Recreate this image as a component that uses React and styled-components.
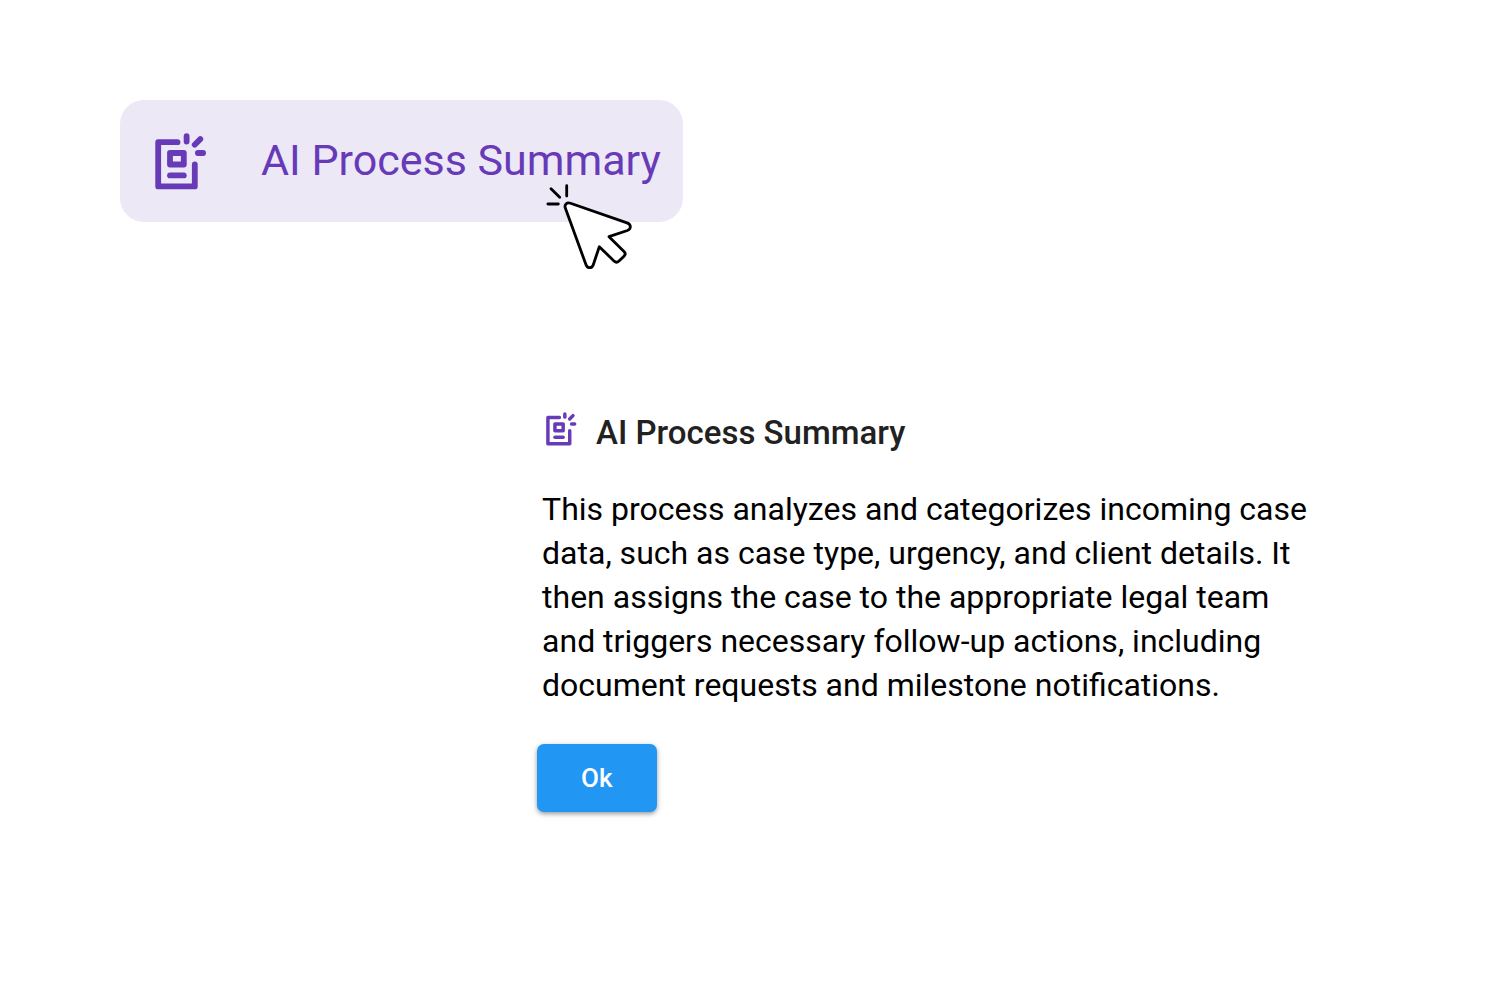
import React, { useState } from "react";
import styled, { createGlobalStyle } from "styled-components";

const GlobalStyle = createGlobalStyle`
  * {
    box-sizing: border-box;
  }

  body {
    margin: 0;
    background: #fff;
    font-family: Roboto, "Liberation Sans", sans-serif;
  }
`;

const Page = styled.main`
  display: flex;
  flex-direction: column;
  align-items: flex-start;
  gap: 190px;
  padding: 100px 8%;
`;

const SummaryButton = styled.button`
  position: relative;
  display: flex;
  align-items: flex-start;
  gap: 54px;
  padding: 33px 22px 32px 35px;
  border: none;
  border-radius: 24px;
  background: #ede8f6;
  color: #673ab7;
  font-family: inherit;
  font-size: 43px;
  line-height: 54px;
  white-space: nowrap;
  cursor: pointer;
`;

const Pointer = styled.svg`
  position: absolute;
  right: 50px;
  bottom: -48px;
  width: 87px;
  height: 86px;
  pointer-events: none;
`;

const Icon = styled.svg`
  flex: none;
  width: ${({ $small }) => ($small ? "31px" : "52px")};
  height: ${({ $small }) => ($small ? "34px" : "57px")};
  color: #673ab7;
`;

const Dialog = styled.section`
  display: flex;
  flex-direction: column;
  align-items: flex-start;
  max-width: 785px;
  margin-left: 33.1%;
`;

const DialogHeader = styled.header`
  display: flex;
  align-items: flex-start;
  gap: 19px;
  padding: 0 9px;
`;

const Title = styled.h2`
  margin: 0;
  color: #212121;
  font-size: 33px;
  font-weight: 500;
  line-height: 42px;
`;

const Description = styled.p`
  margin: 33px 0 37px;
  padding: 0 5px;
  color: #000;
  font-size: 32px;
  line-height: 44px;
`;

const OkButton = styled.button`
  padding: 18px 44px;
  border: none;
  border-radius: 7px;
  background: #2196f3;
  box-shadow: 0 2px 4px rgba(0, 0, 0, 0.35), 0 1px 10px rgba(0, 0, 0, 0.08);
  color: #fff;
  font-family: inherit;
  font-size: 26px;
  font-weight: 500;
  line-height: 32px;
  cursor: pointer;
`;

const SummaryIcon = ({ small }) => (
  <Icon
    $small={small}
    viewBox="0 0 52 57"
    fill="none"
    stroke="currentColor"
    strokeWidth="5.8"
    strokeLinecap="round"
    strokeLinejoin="round"
    aria-hidden="true"
  >
    <path d="M22.5 9.2H3.2v44.2h36.6V31.5" />
    <path d="M15 20h13.8v11.5H15z" />
    <path d="M15 42.4h13.8" />
    <path d="M31.6 3.2v5.4M39.7 11.7l5.6-5.6M42.9 20h5.2" />
  </Icon>
);

const PointerIcon = () => (
  <Pointer
    viewBox="0 0 87 86"
    fill="#fff"
    stroke="#000"
    strokeWidth="2.8"
    strokeLinecap="round"
    strokeLinejoin="round"
    aria-hidden="true"
  >
    <path d="M20.7 1.7V12M5 4.7l8.7 8.6M1.9 20h10.4" />
    <path d="M24.5 19.3L81 38.9C85.4 40.4 85.4 45 81.4 46.5L63 52.7L78 67.4C79.6 69 79.6 70.6 78 72.2L73 77C71.4 78.5 69.6 78.5 68 77L53.3 62.7L47.2 81C46 84.6 41.4 84.6 40.1 81L19.4 24.3C18 20.6 20.8 18 24.5 19.3Z" />
  </Pointer>
);

const App = () => {
  const [open, setOpen] = useState(true);

  return (
    <>
      <GlobalStyle />
      <Page>
        <SummaryButton type="button" onClick={() => setOpen(true)}>
          <SummaryIcon />
          AI Process Summary
          <PointerIcon />
        </SummaryButton>
        {open && (
          <Dialog role="dialog" aria-labelledby="summary-title">
            <DialogHeader>
              <SummaryIcon small />
              <Title id="summary-title">AI Process Summary</Title>
            </DialogHeader>
            <Description>
              This process analyzes and categorizes incoming case data, such as
              case type, urgency, and client details. It then assigns the case
              to the appropriate legal team and triggers necessary follow-up
              actions, including document requests and milestone notifications.
            </Description>
            <OkButton type="button" onClick={() => setOpen(false)}>
              Ok
            </OkButton>
          </Dialog>
        )}
      </Page>
    </>
  );
};

export default App;
